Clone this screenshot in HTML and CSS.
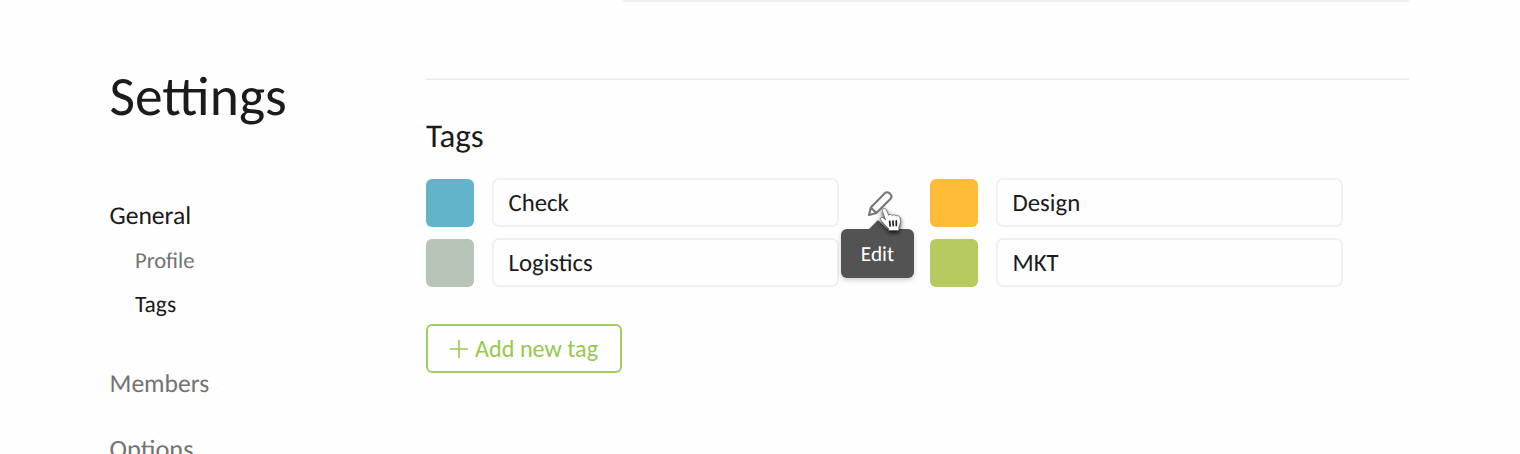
FILE: index.html
```
<!DOCTYPE html>
<html lang="en">
<head>
<meta charset="utf-8">
<title>Settings</title>
<link rel="stylesheet" href="styles.css">
</head>
<body>
<div class="page">
  <aside class="sidebar">
    <h1 class="title"><span>Settings</span></h1>
    <nav class="nav">
      <a class="nav-item active"><span>General</span></a>
      <a class="nav-sub"><span>Profile</span></a>
      <a class="nav-sub active"><span>Tags</span></a>
      <a class="nav-item members"><span>Members</span></a>
      <a class="nav-item options"><span>Options</span></a>
    </nav>
  </aside>
  <main class="content">
    <div class="previous-field"></div>
    <hr class="divider">
    <h2 class="heading"><span>Tags</span></h2>
    <div class="tags">
      <div class="tag"><i class="swatch blue"></i><div class="field"><span>Check</span></div>
        <div class="edit">
          <svg class="pencil" viewBox="0 0 26 27" width="26" height="27"><path d="M2 25 3.8 17.6 17.8 3.2Q19.9 1.3 22.4 3.1L23.5 4.2Q25.4 6.5 23.6 8.8L9.4 23.1ZM3.8 17.6 9.4 23.1" fill="none" stroke="#777" stroke-width="2.1" stroke-linejoin="round"/></svg>
          <div class="tooltip"><span>Edit</span></div>
          <svg class="cursor" viewBox="0 0 24 26" width="24" height="26"><path d="M6.4 18.6C4.8 16.3 3.2 14.8 1.6 13 .6 11 2.6 9.6 4.4 11L6.6 12.8 3.4 4.2C2.8 1.2 6.4.4 7.4 3L9.7 8.3C10.6 7.2 12.5 7.2 13.2 8.6 14.3 7.4 16.3 7.6 16.9 9 18.5 8.1 20.7 9 21.1 11 21.8 14 21.5 17.2 19.8 20.2V23.5H9.6V21.4Z" fill="#fff" stroke="#555" stroke-width=".7"/><path d="M10.6 13.6 11.2 19.6M13.9 13.4 14.3 19.4M17.3 13.2V19.2" stroke="#222" stroke-width="1.7"/></svg>
        </div>
      </div>
      <div class="tag"><i class="swatch orange"></i><div class="field"><span>Design</span></div></div>
      <div class="tag"><i class="swatch sage"></i><div class="field"><span>Logistics</span></div></div>
      <div class="tag"><i class="swatch green"></i><div class="field"><span>MKT</span></div></div>
    </div>
    <button class="add"><svg class="plus" viewBox="0 0 18 18" width="18" height="18"><path d="M9 0V18M0 9H18" stroke="#97c84f" stroke-width="1.6"/></svg><span>Add new tag</span></button>
  </main>
</div>
</body>
</html>
```
FILE: styles.css
```
* { box-sizing: border-box; }
body { margin: 0; height: 454px; overflow: hidden; background: #fefefe; color: #1b1b1b; font-family: Carlito, Lato, sans-serif; text-rendering: geometricPrecision; }
.page { display: flex; height: 454px; overflow: hidden; }
.sidebar { width: 426px; flex: none; padding: 66px 0 0 109.5px; }
.title { margin: 0; font-size: 55.5px; line-height: 60px; font-weight: 400; }
.nav { display: flex; flex-direction: column; padding-top: 75px; }
.nav-item { font-size: 25.6px; line-height: 30px; color: #737373; }
.nav-sub { font-size: 22.6px; line-height: 30px; padding-left: 25.5px; color: #737373; margin-top: 15px; }
.nav .active { color: #1b1b1b; }
.nav-sub.active { margin-top: 14px; font-size: 23.5px; }
.members { margin-top: 49px; }
.options { margin-top: 36px; font-size: 26.4px; }
.content { width: 983px; }
.previous-field { height: 2px; margin-left: 197px; border: solid #efefef; border-width: 0 2px 2px; border-radius: 0 0 6px 6px; }
.divider { height: 2px; margin: 76px 0 0; border: 0; background: linear-gradient(#f3f3f3 50%, #ebebeb 50%); }
.heading { margin: 38px 0 0; font-size: 33px; line-height: 36px; font-weight: 400; }
.tags { display: grid; grid-template-columns: 504px 413px; row-gap: 11px; margin-top: 24px; }
.tag { position: relative; display: flex; align-items: center; }
.swatch { width: 48px; height: 48px; border-radius: 6px; }
.blue { background: #62b4cb; }
.orange { background: #ffbd37; }
.sage { background: #b9c4b8; }
.green { background: #b5cb60; }
.field { display: flex; align-items: center; width: 347px; height: 49px; margin-left: 18px; padding-left: 14.5px; border: 2px solid #f0f0f0; border-radius: 7px; font-size: 24.8px; }
.edit { position: absolute; z-index: 2; left: 415px; top: 12px; width: 73px; height: 90px; }
.pencil { position: absolute; left: 26px; top: 0; }
.tooltip { position: absolute; left: 0; top: 39px; width: 73px; height: 49px; display: flex; align-items: center; justify-content: center; border-radius: 6px; background: #535353; color: #fff; font-size: 21.3px; box-shadow: 0 2px 5px #0003; }
.tooltip::before { content: ""; position: absolute; left: 28px; top: -9px; border: solid transparent; border-width: 0 9px 9px; border-bottom-color: #535353; }
.cursor { position: absolute; left: 38px; top: 17px; filter: drop-shadow(0 2px 2px #000c); }
.add { display: flex; align-items: center; gap: 7px; width: 196px; height: 49px; margin: 37px 0 0; padding: 0 0 0 22px; background: transparent; border: 2px solid #a2ce61; border-radius: 6px; color: #97c84f; font: 24.2px Carlito, Lato, sans-serif; }
```
